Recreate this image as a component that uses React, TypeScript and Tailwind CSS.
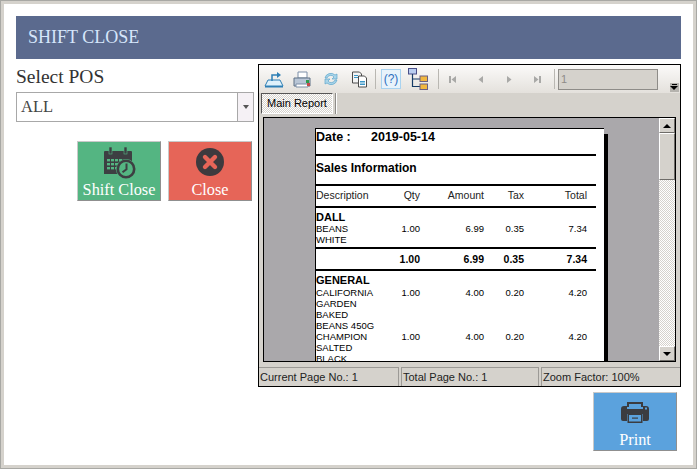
import React from "react";

const SERIF = "font-['Liberation_Serif','DejaVu_Serif',serif]";

const COLS = [
  "w-[60px]",
  "w-[44px]",
  "w-[64px]",
  "w-[40px]",
  "w-[63px]",
];

function Row({ cells, className }: { cells: string[]; className: string }) {
  return (
    <div className={`flex ${className}`}>
      {cells.map((c, i) => (
        <div
          key={i}
          className={`${COLS[i]} shrink-0 whitespace-nowrap ${i === 0 ? "text-left" : "text-right"}`}
        >
          {c}
        </div>
      ))}
    </div>
  );
}

function Rule() {
  return <div className="h-[2px] w-[280px] bg-black" />;
}

function ShiftIcon() {
  return (
    <svg width="33" height="33" viewBox="0 0 33 33" className="block">
      <path d="M2 5h26a1 1 0 0 1 1 1v6H1V6a1 1 0 0 1 1-1z" fill="#3d3f42" />
      <rect x="6" y="1" width="3" height="7" fill="#3d3f42" stroke="#54b582" strokeWidth="0.6" />
      <rect x="21" y="1" width="3" height="7" fill="#3d3f42" stroke="#54b582" strokeWidth="0.6" />
      <rect x="1" y="11" width="28" height="17" fill="#3d3f42" />
      <g fill="#54b582">
        <rect x="4" y="13" width="3" height="2.4" />
        <rect x="8" y="13" width="3" height="2.4" />
        <rect x="12" y="13" width="3" height="2.4" />
        <rect x="16" y="13" width="3" height="2.4" />
        <rect x="4" y="17" width="3" height="2.4" />
        <rect x="8" y="17" width="3" height="2.4" />
        <rect x="12" y="17" width="3" height="2.4" />
        <rect x="4" y="21" width="3" height="2.4" />
        <rect x="8" y="21" width="3" height="2.4" />
        <rect x="12" y="21" width="3" height="2.4" />
      </g>
      <circle cx="23" cy="23" r="10" fill="#54b582" />
      <circle cx="23" cy="23" r="8.2" fill="none" stroke="#3d3f42" strokeWidth="2.6" />
      <path d="M23.5 17.5v5.8l-4 3" fill="none" stroke="#3d3f42" strokeWidth="2" />
    </svg>
  );
}

function CloseIcon() {
  return (
    <svg width="28" height="28" viewBox="0 0 28 28" className="block">
      <circle cx="14" cy="14" r="14" fill="#3d3a3e" />
      <path d="M9 9l10 10M19 9L9 19" stroke="#e66558" strokeWidth="4.4" strokeLinecap="round" />
    </svg>
  );
}

function PrintIcon() {
  return (
    <svg width="28" height="21" viewBox="0 0 28 21" className="block">
      <path d="M7 5V1h14v4" fill="none" stroke="#3b3c40" strokeWidth="2" />
      <path d="M3 4h3v3h16V4h3a3 3 0 0 1 3 3v10a2 2 0 0 1-2 2h-4v-7H6v7H2a2 2 0 0 1-2-2V7a3 3 0 0 1 3-3z" fill="#3b3c40" />
      <rect x="6.5" y="11.5" width="15" height="9.5" fill="#3b3c40" />
      <rect x="8" y="13" width="12" height="6.5" fill="#5ba2dd" />
      <rect x="11" y="15.5" width="6" height="1.2" fill="#3b3c40" />
      <rect x="24" y="5.5" width="2" height="2" fill="#5ba2dd" />
    </svg>
  );
}

function ActionButton({
  label,
  color,
  size,
  children,
}: {
  label: string;
  color: string;
  size: string;
  children: React.ReactNode;
}) {
  return (
    <div
      className={`flex flex-col items-center border border-t-[#c9c9c9] border-l-[#c9c9c9] border-r-[#8f8f8f] border-b-[#8f8f8f] ${color} ${size} ${SERIF} text-[16.3px] leading-[18px] text-white`}
    >
      {children}
      <div className="mt-auto mb-[1px]">{label}</div>
    </div>
  );
}

function TabArrow({ d }: { d: string }) {
  return (
    <svg width="9" height="9" viewBox="0 0 9 9" className="block">
      <path d={d} fill="#a9a9a7" />
    </svg>
  );
}

function Toolbar() {
  return (
    <div className="flex h-[28px] shrink-0 items-center bg-gradient-to-b from-[#fbfaf9] to-[#e4e1dc] pl-[2px]">
      <div className="flex h-[24px] w-[26px] items-center justify-center">
        <svg width="20" height="17" viewBox="0 0 20 17">
          <path d="M1 15l3-6h12l3 6z" fill="#dff1fb" stroke="#2e7fb5" />
          <path d="M1 15h18v1.5H1z" fill="#2e7fb5" />
          <path d="M8 10V4h6" fill="none" stroke="#2e7fb5" strokeWidth="1.5" />
          <path d="M13 1l4 3-4 3z" fill="#2e7fb5" />
        </svg>
      </div>
      <div className="flex h-[24px] w-[29px] items-center justify-center">
        <svg width="18" height="17" viewBox="0 0 18 17">
          <path d="M5 1h9v6H5z" fill="#fff" stroke="#7c8fa8" />
          <path d="M1 7h16v8H1z" fill="#b9c6d6" stroke="#5f7085" />
          <path d="M3 13h12v3H3z" fill="#fff" stroke="#7c8fa8" />
          <path d="M13 9h3v3h-3z" fill="#2f9a4d" />
          <path d="M14 12h3v3h-3z" fill="#c44a4a" />
        </svg>
      </div>
      <div className="flex h-[24px] w-[29px] items-center justify-center">
        <svg width="16" height="16" viewBox="0 0 16 16" fill="none">
          <path d="M2 7a6 6 0 0 1 10-3l2-1v5h-5l2-2a4 4 0 0 0-7 1z" fill="#a9d5ea" stroke="#5fa6cb" strokeWidth="0.7" />
          <path d="M14 9a6 6 0 0 1-10 3l-2 1V8h5l-2 2a4 4 0 0 0 7-1z" fill="#a9d5ea" stroke="#5fa6cb" strokeWidth="0.7" />
        </svg>
      </div>
      <div className="flex h-[24px] w-[28px] items-center justify-center">
        <svg width="17" height="17" viewBox="0 0 17 17">
          <path d="M1.5 1h7l2 2v9h-9z" fill="#f4f4f4" stroke="#4c4c4c" />
          <path d="M7.5 5h6l2 2v9h-8z" fill="#fff" stroke="#4c4c4c" />
          <path d="M9 10h5v1.5H9zM9 12.5h5V14H9z" fill="#3c97c7" />
          <path d="M3 4h4v1H3zM3 6h4v1H3z" fill="#3c97c7" />
        </svg>
      </div>
      <div className="ml-[2px] h-[20px] w-px bg-[#b9b7b2]" />
      <div className="ml-[5px] flex h-[20px] w-[20px] items-center justify-center border border-[#a9d3f0] bg-[#e8f3fb] font-['Liberation_Sans',sans-serif] text-[12px] text-[#2f6fc0]">
        (?)
      </div>
      <div className="ml-[5px] flex h-[24px] w-[24px] items-center justify-center">
        <svg width="20" height="22" viewBox="0 0 20 22">
          <rect x="0.5" y="0.5" width="8" height="5.5" fill="#b9cdf0" stroke="#4a4f88" />
          <path d="M4.5 6v12.5H12M4.5 11H12" fill="none" stroke="#153b66" strokeWidth="1.2" />
          <rect x="12" y="8" width="7.5" height="5.5" fill="#f1b73f" stroke="#6a5f80" />
          <rect x="12" y="16" width="7.5" height="5.5" fill="#f1b73f" stroke="#6a5f80" />
        </svg>
      </div>
      <div className="ml-[8px] h-[20px] w-px bg-[#b9b7b2]" />
      <div className="ml-[9px] flex w-[98px] items-center justify-between pr-[4px]">
        <TabArrow d="M1 1h2v7H1zM8 1v7L3.5 4.5z" />
        <TabArrow d="M7 1v7L2.5 4.5z" />
        <TabArrow d="M2 1v7l4.5-3.5z" />
        <TabArrow d="M1 1v7l4.5-3.5zM6 1h2v7H6z" />
      </div>
      <div className="ml-[8px] h-[20px] w-px bg-[#b9b7b2]" />
      <div className="ml-[3px] flex h-[21px] w-[100px] items-center border border-[#8e8c88] bg-[#d5d2cc] pl-[2px] font-['Liberation_Sans',sans-serif] text-[11px] text-[#8e8c88]">
        1
      </div>
      <div className="ml-[10px] flex h-[28px] flex-1 items-end justify-center">
        <div className="mb-[1px] flex h-[9px] w-[9px] flex-col items-center bg-[#b5b3ae]">
          <div className="mt-[1px] h-px w-[5px] bg-black" />
          <div className="mt-[1px] h-0 w-0 border-x-[4px] border-t-[4px] border-x-transparent border-t-black" />
        </div>
      </div>
    </div>
  );
}

function Report() {
  return (
    <div className="flex min-w-0 flex-1 overflow-hidden bg-[#aaa8ab] pl-[51px]">
      <div className="mt-[10px] flex h-[500px] w-[293px] shrink-0 items-start">
        <div className="h-full w-[289px] border-t border-l border-black bg-white font-['Liberation_Sans',sans-serif] text-black">
          <div className="flex h-[25px] items-end pb-[10px] text-[12.5px] leading-[14px] font-bold">
            <div className="w-[55px]">Date :</div>
            <div>2019-05-14</div>
          </div>
          <Rule />
          <div className="flex h-[28px] items-center pb-[4px] text-[12px] font-bold">Sales Information</div>
          <Rule />
          <Row
            cells={["Description", "Qty", "Amount", "Tax", "Total"]}
            className="h-[20px] items-center pb-[2px] text-[10.5px] leading-[12px] text-[#222]"
          />
          <Rule />
          <div className="pt-[3px] text-[11px] leading-[12px] font-bold">DALL</div>
          <Row cells={["BEANS", "1.00", "6.99", "0.35", "7.34"]} className="h-[11px] items-center text-[9.5px] leading-[11px]" />
          <div className="h-[13px] text-[9.5px] leading-[11px]">WHITE</div>
          <Rule />
          <Row
            cells={["", "1.00", "6.99", "0.35", "7.34"]}
            className="h-[20px] items-center text-[10.5px] leading-[12px] font-bold"
          />
          <Rule />
          <div className="pt-[3px] text-[11px] leading-[13px] font-bold">GENERAL</div>
          <Row cells={["CALIFORNIA", "1.00", "4.00", "0.20", "4.20"]} className="h-[11px] items-center text-[9.5px] leading-[11px]" />
          <div className="text-[9.5px] leading-[11px]">GARDEN</div>
          <div className="text-[9.5px] leading-[11px]">BAKED</div>
          <div className="text-[9.5px] leading-[11px]">BEANS 450G</div>
          <Row cells={["CHAMPION", "1.00", "4.00", "0.20", "4.20"]} className="h-[11px] items-center text-[9.5px] leading-[11px]" />
          <div className="text-[9.5px] leading-[11px]">SALTED</div>
          <div className="text-[9.5px] leading-[11px]">BLACK</div>
        </div>
        <div className="mt-[6px] h-full w-[4px] bg-black" />
      </div>
    </div>
  );
}

function ScrollBar() {
  return (
    <div className="flex w-[16px] shrink-0 flex-col bg-[repeating-conic-gradient(#d5d2cc_0_25%,#ffffff_0_50%)] bg-[length:2px_2px]">
      <div className="flex h-[15px] items-center justify-center border border-t-white border-l-white border-r-[#6e6c68] border-b-[#6e6c68] bg-[#d5d2cc]">
        <div className="h-0 w-0 border-x-[4px] border-b-[4px] border-x-transparent border-b-black" />
      </div>
      <div className="h-[47px] border border-t-white border-l-white border-r-[#6e6c68] border-b-[#6e6c68] bg-[#d5d2cc]" />
      <div className="flex-1" />
      <div className="flex h-[15px] items-center justify-center border border-t-white border-l-white border-r-[#6e6c68] border-b-[#6e6c68] bg-[#d5d2cc]">
        <div className="h-0 w-0 border-x-[4px] border-t-[4px] border-x-transparent border-t-black" />
      </div>
    </div>
  );
}

function Viewer() {
  return (
    <div className="flex h-[323px] w-[423px] flex-col border border-black bg-[#d5d2cc]">
      <Toolbar />
      <div className="flex h-[24px] shrink-0 items-start pl-[2px]">
        <div className="flex h-[21px] items-center border border-t-[#555] border-l-[#555] border-r-white border-b-white bg-[repeating-conic-gradient(#d5d2cc_0_25%,#ffffff_0_50%)] bg-[length:2px_2px] px-[5px] font-['Liberation_Sans',sans-serif] text-[11px] text-black">
          Main Report
        </div>
        <div className="ml-[2px] h-[21px] w-[2px] border-l border-[#8e8c88] bg-white" />
      </div>
      <div className="mx-[4px] flex min-h-0 flex-1 border border-black">
        <Report />
        <ScrollBar />
      </div>
      <div className="mt-[5px] flex h-[19px] shrink-0 gap-[2px] font-['Liberation_Sans',sans-serif] text-[11px] text-[#222]">
        <div className="flex w-[140px] items-center border-t border-r border-[#9c9a96] pl-[1px]">Current Page No.: 1</div>
        <div className="flex w-[138px] items-center border-t border-r border-l border-[#9c9a96] pl-[1px]">Total Page No.: 1</div>
        <div className="flex flex-1 items-center border-t border-l border-[#9c9a96] pl-[1px]">Zoom Factor: 100%</div>
      </div>
    </div>
  );
}

export default function App() {
  return (
    <div className="h-[469px] w-[697px] border border-[#a8a8a4] bg-white">
      <div className="h-full w-full border-[3px] border-[#d5d2cc] bg-white px-[12px] pt-[12px]">
        <div className={`flex h-[43px] w-[665px] items-center bg-[#5b6a8e] pl-[12px] ${SERIF} text-[18px] text-[#d6e6fb]`}>
          SHIFT CLOSE
        </div>
        <div className="mt-[5px] flex">
          <div className="w-[242px] shrink-0">
            <div className={`${SERIF} text-[19.5px] leading-[26px] text-[#333]`}>Select POS</div>
            <div className={`mt-[2px] flex h-[30px] w-[238px] items-center border border-[#a8a8a8] ${SERIF} text-[16.5px] text-[#444]`}>
              <div className="flex-1 pl-[4px]">ALL</div>
              <div className="flex h-full w-[16px] items-center justify-center border-l border-[#a8a8a8] bg-[#f5f1f5]">
                <div className="h-0 w-0 border-x-[3.5px] border-t-[4px] border-x-transparent border-t-[#555]" />
              </div>
            </div>
            <div className="mt-[19px] ml-[61px] flex gap-[7px]">
              <ActionButton label="Shift Close" color="bg-[#54b582] pt-[4px]" size="h-[60px] w-[84px]">
                <ShiftIcon />
              </ActionButton>
              <ActionButton label="Close" color="bg-[#e66558] pt-[6px]" size="h-[60px] w-[84px]">
                <CloseIcon />
              </ActionButton>
            </div>
          </div>
          <Viewer />
        </div>
        <div className="mt-[5px] flex justify-end pr-[4px]">
          <ActionButton label="Print" color="bg-[#5ba2dd] pt-[9px]" size="h-[59px] w-[84px]">
            <PrintIcon />
          </ActionButton>
        </div>
      </div>
    </div>
  );
}
